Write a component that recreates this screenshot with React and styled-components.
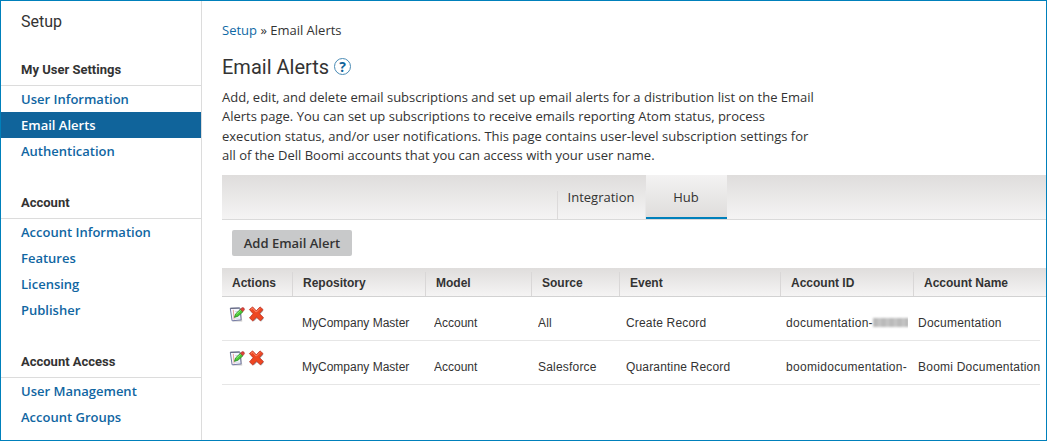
import React from 'react';
import styled, { createGlobalStyle } from 'styled-components';

const GlobalStyle = createGlobalStyle`
  * { box-sizing: border-box; }
  body { margin: 0; background: #fff; color: #333; font: 13px 'Open Sans', sans-serif; }
`;

const Frame = styled.div`
  display: flex;
  width: 1047px;
  height: 441px;
  border: 1px solid #0080bb;
  background: #fff;
  overflow: hidden;
`;

const Sidebar = styled.nav`
  flex: none;
  width: 201px;
  border-right: 1px solid #dcdcdc;
`;

const SidebarTitle = styled.div`
  height: 30px;
  padding: 10px 20px 0;
  font: 16px/21px Roboto, sans-serif;
`;

const GroupTitle = styled.h3`
  height: 55px;
  margin: 0;
  padding: 29px 20px 0;
  border-bottom: 1px solid #dcdcdc;
  font: 700 13px/20px Roboto, sans-serif;
`;

const NavItem = styled.a`
  display: block;
  height: 26px;
  padding-left: 20px;
  font-size: 13px;
  line-height: 26px;
  font-weight: 600;
  color: ${(p) => (p.$active ? '#fff' : '#1066a2')};
  background: ${(p) => (p.$active ? '#10649b' : 'transparent')};
`;

const Main = styled.main`
  flex: 1;
  min-width: 0;
  padding: 19px 0 0 20px;
`;

const Breadcrumb = styled.div`
  height: 20px;
  line-height: 20px;
`;

const Crumb = styled.a`
  color: #0f69a5;
`;

const Title = styled.h1`
  display: flex;
  align-items: center;
  gap: 5px;
  height: 26px;
  margin: 14px 0 8px;
  font: 400 20px/26px Roboto, sans-serif;
`;

const HelpBadge = styled.span`
  display: flex;
  align-items: center;
  justify-content: center;
  width: 17px;
  height: 17px;
  margin-top: -1px;
  border: 1px solid #4a8bb5;
  border-radius: 50%;
  color: #10649b;
  font: 700 14px/15px 'Open Sans', sans-serif;
`;

const Intro = styled.p`
  width: 600px;
  height: 87px;
  margin: 0;
  line-height: 19.4px;
`;

const TabBar = styled.div`
  display: flex;
  justify-content: center;
  align-items: flex-end;
  height: 45px;
  padding-left: 15px;
  border-bottom: 1px solid #dadada;
  background: linear-gradient(#dfdddc, #f5f4f4);
`;

const Tab = styled.div`
  flex: none;
  width: ${(p) => p.$width}px;
  height: ${(p) => (p.$active ? 44 : 28)}px;
  line-height: ${(p) => (p.$active ? 44 : 12)}px;
  text-align: center;
  ${(p) =>
    p.$active
      ? 'background: linear-gradient(#f3f2f2, #dfdddc); border-bottom: 2px solid #0080bb;'
      : 'border-left: 1px solid #dcdada; border-right: 1px solid #e9e8e8;'}
`;

const Toolbar = styled.div`
  height: 48px;
  padding: 10px;
`;

const Button = styled.button`
  display: block;
  width: 120px;
  height: 26px;
  padding: 0;
  border: 0;
  border-radius: 2px;
  background: #c8c9ca;
  color: #333;
  font: 600 13px/26px 'Open Sans', sans-serif;
`;

const HeaderRow = styled.div`
  display: grid;
  grid-template-columns: 71px 133px 106px 88px 161px 133px 1fr;
  align-items: end;
  height: 29px;
  border-bottom: 1px solid #d2d2d2;
  background: linear-gradient(#dfdddc, #f5f4f4);
`;

const HeaderCell = styled.div`
  height: 24px;
  padding-left: 10px;
  border-right: 1px solid #d9d7d7;
  font: 700 12px/22px 'Liberation Sans', Arial, sans-serif;
  &:last-child { border-right: 0; }
`;

const Row = styled.div`
  display: grid;
  grid-template-columns: 80px 132px 104px 88px 160px 132px 122.5px;
  width: 818px;
  height: 44px;
  border-bottom: 1px solid #e6e6e6;
  font: 12px/14px 'Liberation Sans', Arial, sans-serif;
`;

const Cell = styled.div`
  display: flex;
  margin-right: 10px;
  padding-top: 19px;
  overflow: hidden;
  white-space: nowrap;
  letter-spacing: ${(p) => p.$spacing || 0}px;
  &:last-child { margin-right: 0; }
`;

const Actions = styled.div`
  display: flex;
  gap: 2px;
  padding: 9px 0 0 7px;
`;

const Redacted = styled.span`
  flex: none;
  width: 36px;
  height: 9px;
  margin: 2px 0 0;
  background: repeating-linear-gradient(90deg, #bababa 0 4px, #c6c6c6 6px 8px);
  filter: blur(1px);
`;

const EditIcon = () => (
  <svg width="17" height="17" viewBox="0 0 17 17">
    <path d="M3.2 3.4h9.2l.8 12H4z" fill="#888" opacity=".45" />
    <path d="M1.3 2.4l9.6-.4 1.2 11.9-9 .9z" fill="#f7f8ff" stroke="#747aa3" />
    <path d="M1.3 2.3l9.2-.3" stroke="#666a80" strokeWidth="1.2" />
    <path d="M4.3 3.8l.8 9.8" stroke="#eb9c94" strokeWidth=".9" />
    <path d="M6 5.5h4M6.2 12.4l4.6-.3" stroke="#c9cfe2" strokeWidth=".7" />
    <path d="M5.4 11.4l1.2-3.5 5-4.7 2.4 2.5-5 4.5z" fill="#4acb35" stroke="#2a8722" strokeWidth=".8" />
    <path d="M7.5 8.2l4.1-3.8" stroke="#9aef83" strokeWidth=".9" />
    <path d="M11.5 3.3l1.4-1.6 2 .2.5 1.9-1.5 1.7z" fill="#e4433a" stroke="#a82d28" strokeWidth=".7" />
  </svg>
);

const DeleteIcon = () => (
  <svg width="17" height="17" viewBox="0 0 17 17">
    <path d="M1.8 3.6L4.7 1.3l3.6 3.8 3.6-3.8 2.7 2.3-3.5 4 3.9 4-2.7 2.9-3.8-3.6-3.7 3.7-2.9-2.8 3.5-4.1z" fill="#777" opacity=".6" transform="translate(.9 1)" />
    <path d="M1.4 3.5L4.6.9l3.7 3.9L12 .9l3 2.6-3.6 4.1 4 4-3 3.2-3.9-3.6-3.8 3.7-3.2-3 3.6-4.2z" fill="#ee4722" stroke="#bb3022" strokeWidth=".8" strokeLinejoin="round" />
    <path d="M2.8 3.6l1.8-1.4 3.7 3.9L12 2.4" fill="none" stroke="#ff9478" strokeWidth=".9" />
  </svg>
);

const groups = [
  ['My User Settings', ['User Information', 'Email Alerts', 'Authentication']],
  ['Account', ['Account Information', 'Features', 'Licensing', 'Publisher']],
  ['Account Access', ['User Management', 'Account Groups']],
];

const columns = ['Actions', 'Repository', 'Model', 'Source', 'Event', 'Account ID', 'Account Name'];

const rows = [
  { repository: 'MyCompany Master', model: 'Account', source: 'All', event: 'Create Record', id: 'documentation-', redacted: true, name: 'Documentation' },
  { repository: 'MyCompany Master', model: 'Account', source: 'Salesforce', event: 'Quarantine Record', id: 'boomidocumentation-', name: 'Boomi Documentation' },
];

export default function App() {
  return (
    <Frame>
      <GlobalStyle />
      <Sidebar>
        <SidebarTitle>Setup</SidebarTitle>
        {groups.map(([title, items]) => (
          <React.Fragment key={title}>
            <GroupTitle>{title}</GroupTitle>
            {items.map((item) => (
              <NavItem key={item} $active={item === 'Email Alerts'}>{item}</NavItem>
            ))}
          </React.Fragment>
        ))}
      </Sidebar>
      <Main>
        <Breadcrumb><Crumb>Setup</Crumb> » Email Alerts</Breadcrumb>
        <Title>Email Alerts <HelpBadge>?</HelpBadge></Title>
        <Intro>
          Add, edit, and delete email subscriptions and set up email alerts for a distribution list on the Email<br />
          Alerts page. You can set up subscriptions to receive emails reporting Atom status, process<br />
          execution status, and/or user notifications. This page contains user-level subscription settings for<br />
          all of the Dell Boomi accounts that you can access with your user name.
        </Intro>
        <TabBar>
          <Tab $width={89}>Integration</Tab>
          <Tab $width={81} $active>Hub</Tab>
        </TabBar>
        <Toolbar><Button>Add Email Alert</Button></Toolbar>
        <HeaderRow>{columns.map((c) => <HeaderCell key={c}>{c}</HeaderCell>)}</HeaderRow>
        {rows.map((r) => (
          <Row key={r.id}>
            <Actions><EditIcon /><DeleteIcon /></Actions>
            <Cell>{r.repository}</Cell>
            <Cell>{r.model}</Cell>
            <Cell $spacing={0.2}>{r.source}</Cell>
            <Cell $spacing={0.17}>{r.event}</Cell>
            <Cell $spacing={0.3}>{r.id}{r.redacted && <Redacted />}</Cell>
            <Cell $spacing={0.23}>{r.name}</Cell>
          </Row>
        ))}
      </Main>
    </Frame>
  );
}
